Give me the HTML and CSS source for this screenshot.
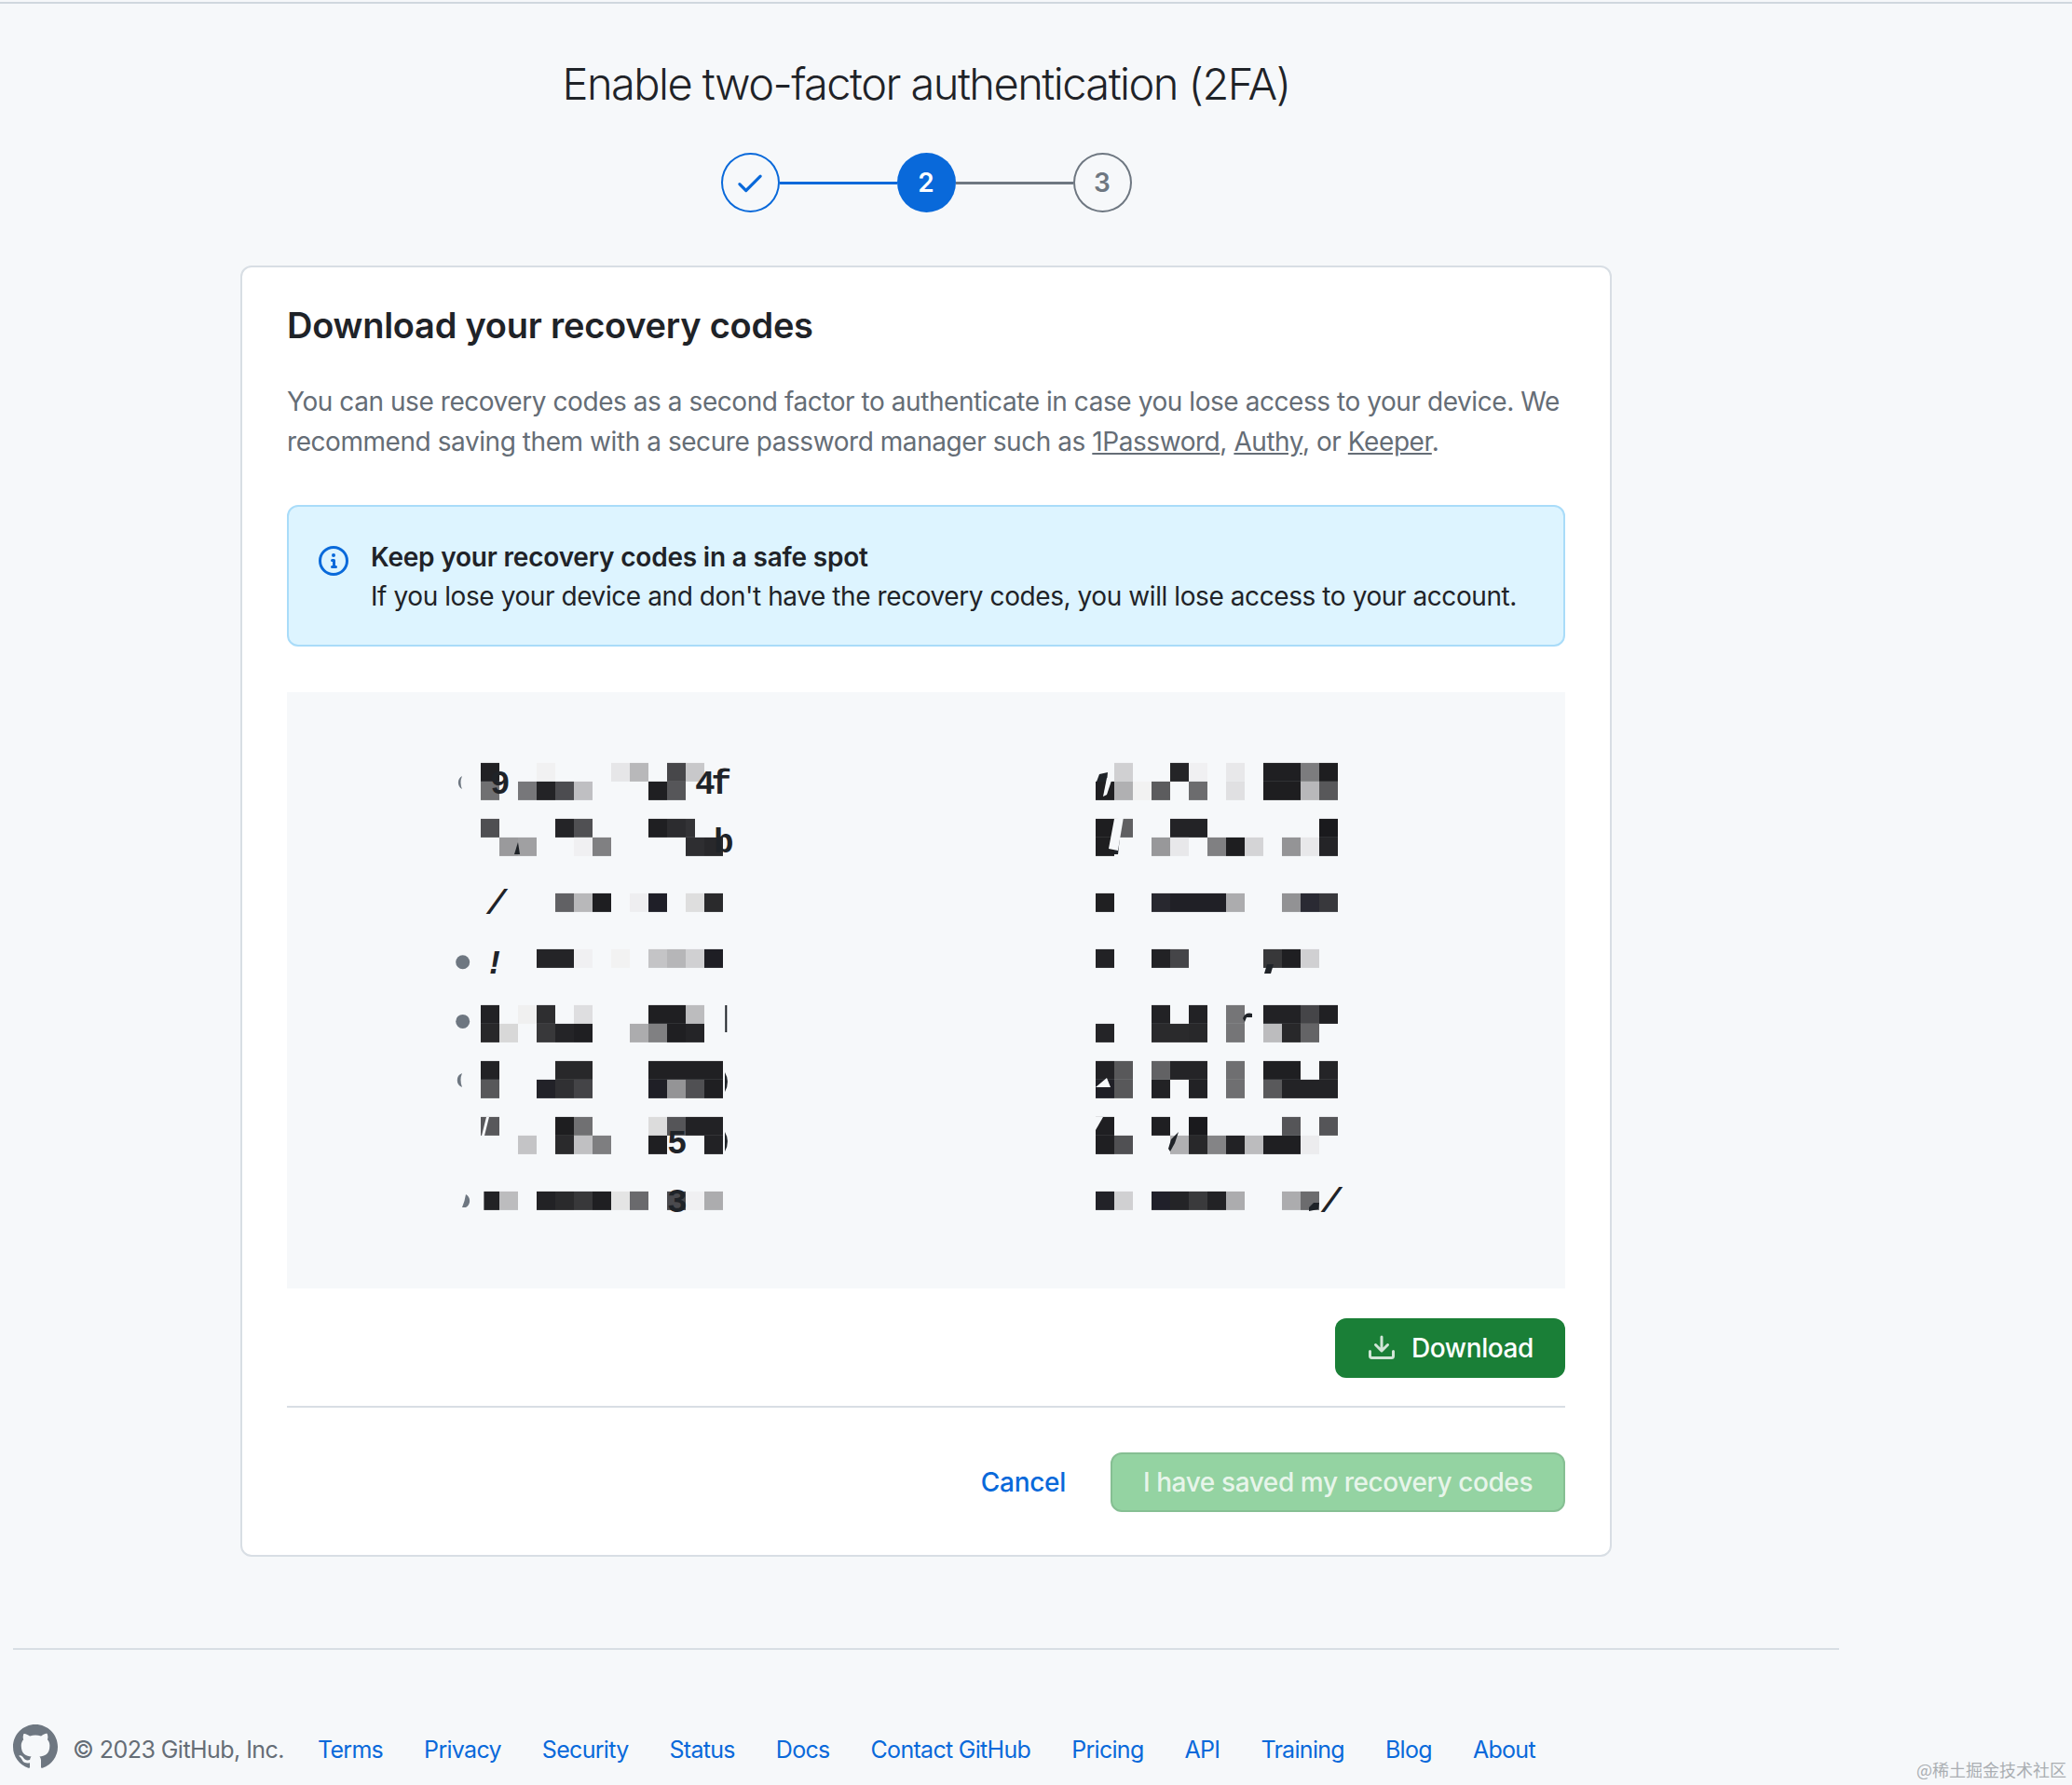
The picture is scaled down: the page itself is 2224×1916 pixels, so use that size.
FILE: index.html
```html
<!DOCTYPE html>
<html lang="en">
<head>
<meta charset="utf-8">
<title>Enable two-factor authentication (2FA)</title>
<link rel="stylesheet" href="styles.css">
</head>
<body>
<div class="page">
  <h1 class="title">Enable two-factor authentication (2FA)</h1>
  <div class="stepper">
    <span class="step step-done"><svg class="check" viewBox="0 0 16 16"><path d="M13.78 4.22a.75.75 0 0 1 0 1.06l-7.25 7.25a.75.75 0 0 1-1.06 0L2.22 9.28a.751.751 0 0 1 .018-1.042.751.751 0 0 1 1.042-.018L6 10.94l6.72-6.72a.75.75 0 0 1 1.06 0Z"/></svg></span>
    <span class="link link-done"></span>
    <span class="step step-current">2</span>
    <span class="link"></span>
    <span class="step step-next">3</span>
  </div>
  <main class="card">
    <h2 class="card-title">Download your recovery codes</h2>
    <p class="lead">You can use recovery codes as a second factor to authenticate in case you lose access to your device. We recommend saving them with a secure password manager such as <a href="#">1Password</a>, <a href="#">Authy</a>, or <a href="#">Keeper</a>.</p>
    <div class="alert">
      <svg class="alert-icon" viewBox="0 0 16 16"><path d="M0 8a8 8 0 1 1 16 0A8 8 0 0 1 0 8Zm8-6.5a6.5 6.5 0 1 0 0 13 6.5 6.5 0 0 0 0-13ZM6.5 7.75A.75.75 0 0 1 7.25 7h1a.75.75 0 0 1 .75.75v2.75h.25a.75.75 0 0 1 0 1.5h-2a.75.75 0 0 1 0-1.5h.25v-2h-.25a.75.75 0 0 1-.75-.75ZM8 6a1 1 0 1 1 0-2 1 1 0 0 1 0 2Z"/></svg>
      <div>
        <div class="alert-title">Keep your recovery codes in a safe spot</div>
        <div class="alert-text">If you lose your device and don't have the recovery codes, you will lose access to your account.</div>
      </div>
    </div>
    <div class="codes">
      <svg class="mosaic" viewBox="0 0 1372 640">
        <g class="bullets">
          <circle cx="188.7" cy="289.8" r="7.5"/><circle cx="188.7" cy="353.4" r="7.5"/>
          <path d="M188 90 A8 8 0 0 0 188 104 Q185 97 188 90Z"/>
          <path d="M188 409 A8 8 0 0 0 188 424 Q185 416 188 409Z"/>
          <path d="M192 539 A8 8 0 0 1 192 553 L188 553 Q191 546 192 539Z"/>
        </g>
        <g transform="translate(208 75.9) scale(20)">
          <rect width="1" height="1" x="0" y="0" fill="#212124"/><rect width="1" height="1" x="3" y="0" fill="#f1f1f2"/><rect width="1" height="1" x="7" y="0" fill="#e6e6e8"/><rect width="1" height="1" x="8" y="0" fill="#b8b8ba"/><rect width="1" height="1" x="10" y="0" fill="#47474a"/><rect width="1" height="1" x="11" y="0" fill="#c8c8ca"/>
          <rect width="1" height="1" x="0" y="1" fill="#707072"/><rect width="1" height="1" x="2" y="1" fill="#77777a"/><rect width="1" height="1" x="3" y="1" fill="#232326"/><rect width="1" height="1" x="4" y="1" fill="#4c4c50"/><rect width="1" height="1" x="5" y="1" fill="#bfbfc2"/><rect width="1" height="1" x="9" y="1" fill="#1f1f22"/><rect width="1" height="1" x="10" y="1" fill="#565659"/>
          <rect width="1" height="1" x="0" y="3" fill="#4f4f52"/><rect width="1" height="1" x="4" y="3" fill="#242427"/><rect width="1" height="1" x="5" y="3" fill="#505053"/><rect width="1" height="1" x="9" y="3" fill="#1f1f22"/><rect width="1" height="1" x="10" y="3" fill="#2c2c2f"/><rect width="0.5" height="1" x="11" y="3" fill="#333336"/>
          <rect width="1" height="1" x="1" y="4" fill="#9a9a9c"/><rect width="1" height="1" x="2" y="4" fill="#a0a0a2"/><rect width="1" height="1" x="5" y="4" fill="#f0f0f2"/><rect width="1" height="1" x="6" y="4" fill="#808082"/><rect width="1" height="1" x="11" y="4" fill="#2e2e31"/><rect width="1" height="1" x="12" y="4" fill="#28282b"/>
          <rect width="1" height="1" x="4" y="7" fill="#616164"/><rect width="1" height="1" x="5" y="7" fill="#b8b8ba"/><rect width="1" height="1" x="6" y="7" fill="#1e1e21"/><rect width="1" height="1" x="8" y="7" fill="#eeeef0"/><rect width="1" height="1" x="9" y="7" fill="#1f1f28"/><rect width="1" height="1" x="11" y="7" fill="#dedede"/><rect width="1" height="1" x="12" y="7" fill="#2a2a2c"/>
          <rect width="2" height="1" x="3" y="10" fill="#242427"/><rect width="1" height="1" x="5" y="10" fill="#f0f0f2"/><rect width="1" height="1" x="7" y="10" fill="#f2f2f2"/><rect width="1" height="1" x="9" y="10" fill="#c4c4c6"/><rect width="1" height="1" x="10" y="10" fill="#b6b6b8"/><rect width="1" height="1" x="11" y="10" fill="#d0d0d2"/><rect width="1" height="1" x="12" y="10" fill="#1e1e24"/>
          <rect width="1" height="1" x="0" y="13" fill="#222225"/><rect width="1" height="1" x="2" y="13" fill="#f0f0f0"/><rect width="1" height="1" x="3" y="13" fill="#2e2e30"/><rect width="1" height="1" x="5" y="13" fill="#dedee0"/><rect width="2" height="1" x="9" y="13" fill="#1f1f22"/><rect width="1" height="1" x="11" y="13" fill="#bcbcbe"/>
          <rect width="1" height="1" x="0" y="14" fill="#28282a"/><rect width="1" height="1" x="1" y="14" fill="#d8d8d8"/><rect width="1" height="1" x="3" y="14" fill="#38383a"/><rect width="1" height="1" x="4" y="14" fill="#242427"/><rect width="1" height="1" x="5" y="14" fill="#1f1f22"/><rect width="1" height="1" x="8" y="14" fill="#acacae"/><rect width="1" height="1" x="9" y="14" fill="#808082"/><rect width="1" height="1" x="10" y="14" fill="#1f1f22"/><rect width="1" height="1" x="11" y="14" fill="#242427"/>
          <rect width="1" height="1" x="0" y="16" fill="#222225"/><rect width="2" height="1" x="4" y="16" fill="#28282a"/><rect width="4" height="1" x="9" y="16" fill="#202023"/>
          <rect width="1" height="1" x="0" y="17" fill="#58585a"/><rect width="1" height="1" x="3" y="17" fill="#222228"/><rect width="1" height="1" x="4" y="17" fill="#303033"/><rect width="1" height="1" x="5" y="17" fill="#444447"/><rect width="1" height="1" x="9" y="17" fill="#1f1f26"/><rect width="1" height="1" x="10" y="17" fill="#949496"/><rect width="1" height="1" x="11" y="17" fill="#505053"/><rect width="1" height="1" x="12" y="17" fill="#1f1f22"/>
          <rect width="1" height="1" x="0" y="19" fill="#58585b"/><rect width="1" height="1" x="4" y="19" fill="#1e1e20"/><rect width="1" height="1" x="5" y="19" fill="#707072"/><rect width="1" height="1" x="9" y="19" fill="#dcdcdc"/><rect width="1" height="1" x="10" y="19" fill="#555558"/><rect width="2" height="1" x="11" y="19" fill="#222225"/>
          <rect width="1" height="1" x="2" y="20" fill="#c4c4c6"/><rect width="1" height="1" x="4" y="20" fill="#2a2a2c"/><rect width="1" height="1" x="5" y="20" fill="#c0c0c2"/><rect width="1" height="1" x="6" y="20" fill="#7e7e80"/><rect width="1" height="1" x="9" y="20" fill="#1f1f22"/><rect width="1" height="1" x="12" y="20" fill="#222225"/>
          <rect width="0.83" height="1" x="0.17" y="23" fill="#222225"/><rect width="1" height="1" x="1" y="23" fill="#bcbcbe"/><rect width="1" height="1" x="3" y="23" fill="#222225"/><rect width="1" height="1" x="4" y="23" fill="#2a2a2c"/><rect width="1" height="1" x="5" y="23" fill="#38383a"/><rect width="1" height="1" x="6" y="23" fill="#1f1f22"/><rect width="1" height="1" x="7" y="23" fill="#e4e4e4"/><rect width="1" height="1" x="8" y="23" fill="#6a6a6d"/><rect width="1" height="1" x="10" y="23" fill="#4a4a4e"/><rect width="1" height="1" x="11" y="23" fill="#f0f0f2"/><rect width="1" height="1" x="12" y="23" fill="#acacae"/>
        </g>
        <g transform="translate(868 75.9) scale(20)">
          <rect width="1" height="1" x="1" y="0" fill="#d0d0d2"/><rect width="1" height="1" x="4" y="0" fill="#242427"/><rect width="1" height="1" x="5" y="0" fill="#f0f0f2"/><rect width="1" height="1" x="7" y="0" fill="#e8e8ea"/><rect width="2" height="1" x="9" y="0" fill="#1f1f22"/><rect width="1" height="1" x="11" y="0" fill="#7c7c7e"/><rect width="1" height="1" x="12" y="0" fill="#1e1e20"/>
          <rect width="1" height="1" x="0" y="1" fill="#1f1f22"/><rect width="1" height="1" x="1" y="1" fill="#b0b0b2"/><rect width="1" height="1" x="2" y="1" fill="#f2f2f2"/><rect width="1" height="1" x="3" y="1" fill="#5c5c5e"/><rect width="1" height="1" x="5" y="1" fill="#6c6c6e"/><rect width="1" height="1" x="7" y="1" fill="#e0e0e2"/><rect width="2" height="1" x="9" y="1" fill="#1e1e20"/><rect width="1" height="1" x="11" y="1" fill="#b8b8ba"/><rect width="1" height="1" x="12" y="1" fill="#58585a"/>
          <rect width="1" height="1" x="0" y="3" fill="#1e1e20"/><rect width="1" height="1" x="1" y="3" fill="#606062"/><rect width="2" height="1" x="4" y="3" fill="#232326"/><rect width="1" height="1" x="12" y="3" fill="#1a1a1d"/>
          <rect width="1" height="1" x="0" y="4" fill="#1e1e20"/><rect width="1" height="1" x="3" y="4" fill="#98989a"/><rect width="1" height="1" x="4" y="4" fill="#e8e8ea"/><rect width="1" height="1" x="6" y="4" fill="#808082"/><rect width="1" height="1" x="7" y="4" fill="#1e1e20"/><rect width="1" height="1" x="8" y="4" fill="#d4d4d6"/><rect width="1" height="1" x="10" y="4" fill="#949496"/><rect width="1" height="1" x="11" y="4" fill="#e8e8ea"/><rect width="1" height="1" x="12" y="4" fill="#242427"/>
          <rect width="1" height="1" x="0" y="7" fill="#202022"/><rect width="1" height="1" x="3" y="7" fill="#28282f"/><rect width="3" height="1" x="4" y="7" fill="#202026"/><rect width="1" height="1" x="7" y="7" fill="#acacae"/><rect width="1" height="1" x="10" y="7" fill="#929294"/><rect width="1" height="1" x="11" y="7" fill="#2a2a33"/><rect width="1" height="1" x="12" y="7" fill="#38383c"/>
          <rect width="1" height="1" x="0" y="10" fill="#222225"/><rect width="1" height="1" x="3" y="10" fill="#222225"/><rect width="1" height="1" x="4" y="10" fill="#454548"/><rect width="1" height="1" x="9" y="10" fill="#38383a"/><rect width="1" height="1" x="10" y="10" fill="#1f1f22"/><rect width="1" height="1" x="11" y="10" fill="#d0d0d2"/>
          <rect width="1" height="1" x="3" y="13" fill="#222225"/><rect width="1" height="1" x="5" y="13" fill="#222225"/><rect width="1" height="1" x="7" y="13" fill="#757577"/><rect width="2" height="1" x="9" y="13" fill="#222225"/><rect width="1" height="1" x="11" y="13" fill="#454548"/><rect width="1" height="1" x="12" y="13" fill="#202023"/>
          <rect width="1" height="1" x="0" y="14" fill="#242427"/><rect width="2" height="1" x="3" y="14" fill="#2a2a2c"/><rect width="1" height="1" x="5" y="14" fill="#28282a"/><rect width="1" height="1" x="7" y="14" fill="#757577"/><rect width="1" height="1" x="9" y="14" fill="#bcbcbe"/><rect width="1" height="1" x="10" y="14" fill="#28282a"/><rect width="1" height="1" x="11" y="14" fill="#646466"/>
          <rect width="1" height="1" x="0" y="16" fill="#222225"/><rect width="1" height="1" x="1" y="16" fill="#58585a"/><rect width="1" height="1" x="3" y="16" fill="#626264"/><rect width="2" height="1" x="4" y="16" fill="#242427"/><rect width="1" height="1" x="7" y="16" fill="#6f6f71"/><rect width="2" height="1" x="9" y="16" fill="#1f1f22"/><rect width="1" height="1" x="12" y="16" fill="#242427"/>
          <rect width="1" height="1" x="0" y="17" fill="#1f1f26"/><rect width="1" height="1" x="1" y="17" fill="#58585a"/><rect width="1" height="1" x="3" y="17" fill="#222225"/><rect width="1" height="1" x="5" y="17" fill="#222225"/><rect width="1" height="1" x="7" y="17" fill="#6f6f71"/><rect width="1" height="1" x="9" y="17" fill="#59595b"/><rect width="3" height="1" x="10" y="17" fill="#232326"/>
          <rect width="1" height="1" x="0" y="19" fill="#1f1f22"/><rect width="1" height="1" x="3" y="19" fill="#1f1f22"/><rect width="1" height="1" x="5" y="19" fill="#1a1a1d"/><rect width="1" height="1" x="10" y="19" fill="#555558"/><rect width="1" height="1" x="12" y="19" fill="#555558"/>
          <rect width="1" height="1" x="0" y="20" fill="#1f1f22"/><rect width="1" height="1" x="1" y="20" fill="#505053"/><rect width="1" height="1" x="4" y="20" fill="#b0b0b2"/><rect width="1" height="1" x="5" y="20" fill="#28282a"/><rect width="1" height="1" x="6" y="20" fill="#848486"/><rect width="1" height="1" x="7" y="20" fill="#222225"/><rect width="1" height="1" x="8" y="20" fill="#bcbcbe"/><rect width="2" height="1" x="9" y="20" fill="#1f1f22"/><rect width="1" height="1" x="11" y="20" fill="#ececee"/>
          <rect width="1" height="1" x="0" y="23" fill="#222228"/><rect width="1" height="1" x="1" y="23" fill="#d0d0d2"/><rect width="1" height="1" x="3" y="23" fill="#20202a"/><rect width="1" height="1" x="4" y="23" fill="#242427"/><rect width="1" height="1" x="5" y="23" fill="#3a3a3c"/><rect width="1" height="1" x="6" y="23" fill="#222225"/><rect width="1" height="1" x="7" y="23" fill="#acacae"/><rect width="1" height="1" x="10" y="23" fill="#acacae"/><rect width="1" height="1" x="11" y="23" fill="#6c6c6e"/>
        </g>
        <g class="artifacts">
          <rect x="470.3" y="336" width="2" height="29"/>
          <path d="M470 408 Q476 418 470 429Z"/>
          <path d="M470 472 Q476 482 470 493Z"/>
          <path d="M869 96 L872 88 L881 86 L880 96Z"/>
          <path d="M888 156 L894 156 L892 174 L888 174Z"/>
          <path d="M1052 292 L1059 292 L1056 302 L1049 302Z"/>
          <path d="M1026 350 Q1029 343 1036 345 L1036 349 L1030 349 L1028 354Z"/>
          <path d="M949 480 L957 472 L953 484 L948 493 L946 490Z"/>
          <path d="M244 174 L248 161 L250 174Z"/>
          <path d="M1102 548 L1108 548 L1107 555 L1097 557 L1097 553Z"/>
        </g>
        <g class="artifacts-light">
          <path d="M209 476 L214 456 L217 456 L212 476Z"/>
          <path d="M868 456 L868 470 L876 456Z"/>
          <path d="M868 424 L880 414 L884 424Z"/>
          <path d="M886 92 L880 110 L876 112 L880 92Z"/>
          <path d="M888 136 L898 134 L892 170 L882 168Z"/>
        </g>
        <g class="code-text">
          <text x="438" y="109.4">4f</text>
          <text x="218" y="109.4">9</text>
          <text x="458" y="172">b</text>
          <text x="214" y="238" class="slanted">/</text>
          <text x="1110" y="557.6" class="slanted">/</text>
          <text x="408" y="557.6">3</text>
          <text x="408" y="495">5</text>
          <text x="212" y="301.6" class="slanted">!</text>
        </g>
      </svg>
    </div>
    <div class="download-row">
      <button class="btn btn-primary" type="button"><svg class="btn-icon" viewBox="0 0 16 16"><path d="M2.75 14A1.75 1.75 0 0 1 1 12.25v-2.5a.75.75 0 0 1 1.5 0v2.5c0 .138.112.25.25.25h10.5a.25.25 0 0 0 .25-.25v-2.5a.75.75 0 0 1 1.5 0v2.5A1.75 1.75 0 0 1 13.25 14Z"/><path d="M7.25 7.689V2a.75.75 0 0 1 1.5 0v5.689l1.97-1.969a.749.749 0 1 1 1.06 1.06l-3.25 3.25a.749.749 0 0 1-1.06 0L4.22 6.78a.749.749 0 1 1 1.06-1.06l1.97 1.969Z"/></svg>Download</button>
    </div>
    <div class="actions">
      <a class="cancel" href="#">Cancel</a>
      <button class="btn btn-disabled" type="button">I have saved my recovery codes</button>
    </div>
  </main>
  <footer class="footer">
    <svg class="mark" viewBox="0 0 16 16"><path d="M8 0c4.42 0 8 3.58 8 8a8.013 8.013 0 0 1-5.45 7.59c-.4.08-.55-.17-.55-.38 0-.27.01-1.13.01-2.2 0-.75-.25-1.23-.54-1.48 1.78-.2 3.65-.88 3.65-3.95 0-.88-.31-1.59-.82-2.15.08-.2.36-1.02-.08-2.12 0 0-.67-.22-2.2.82-.64-.18-1.32-.27-2-.27-.68 0-1.36.09-2 .27-1.53-1.03-2.2-.82-2.2-.82-.44 1.1-.16 1.92-.08 2.12-.51.56-.82 1.28-.82 2.15 0 3.06 1.86 3.75 3.64 3.95-.23.2-.44.55-.51 1.07-.46.21-1.61.55-2.33-.66-.15-.24-.6-.83-1.23-.82-.67.01-.27.38.01.53.34.19.73.9.82 1.13.16.45.68 1.31 2.69.94 0 .67.01 1.3.01 1.49 0 .21-.15.45-.55.38A7.995 7.995 0 0 1 0 8c0-4.42 3.58-8 8-8Z"/></svg>
    <span class="copyright">© 2023 GitHub, Inc.</span>
    <nav class="footer-links">
      <a href="#">Terms</a><a href="#">Privacy</a><a href="#">Security</a><a href="#">Status</a><a href="#">Docs</a><a href="#">Contact GitHub</a><a href="#">Pricing</a><a href="#">API</a><a href="#">Training</a><a href="#">Blog</a><a href="#">About</a>
    </nav>
  </footer>
</div>
<div class="watermark">@稀土掘金技术社区</div>
</body>
</html>
```

FILE: styles.css
```css
* { box-sizing: border-box; }
html, body { margin: 0; padding: 0; }
body {
  position: relative;
  width: 2224px;
  height: 1916px;
  overflow: hidden;
  margin-top: 0;
  padding-top: 2px;
  background: #f6f8fa;
  font-family: Inter, "Noto Sans CJK SC", sans-serif;
  font-size: 28px;
  color: #1f2328;
}
.page {
  padding: 0 250px 0 14px;
  border-top: 2px solid #d0d7de;
  display: flex;
  flex-direction: column;
  align-items: center;
}
.title {
  margin: 56px 0 0;
  font-size: 47px;
  line-height: 60px;
  font-weight: 300;
  letter-spacing: -1.55px;
  color: #1f2328;
}
.stepper {
  display: flex;
  align-items: center;
  margin-top: 44px;
}
.step {
  width: 63px;
  height: 64px;
  border-radius: 50%;
  display: flex;
  align-items: center;
  justify-content: center;
  font-size: 28px;
  font-weight: 600;
}
.step-done { border: 2px solid #0969da; }
.check { width: 34px; height: 34px; fill: #0969da; }
.step-current { background: #0969da; color: #fff; }
.step-next { border: 2px solid #6e7781; color: #6e7781; }
.link { width: 126px; height: 3px; background: #6e7781; }
.link-done { background: #0969da; }
.card {
  width: 1472px;
  height: 1386px;
  margin-top: 57px;
  padding: 38px 48px 0;
  background: #fff;
  border: 2px solid #d8dee4;
  border-radius: 12px;
}
.card-title {
  margin: 0;
  font-size: 38px;
  line-height: 48px;
  font-weight: 600;
  letter-spacing: -0.25px;
}
.lead {
  margin: 37px 0 0;
  line-height: 42.5px;
  font-size: 28px;
  letter-spacing: -0.44px;
  color: #656d76;
}
.lead a { color: #656d76; text-decoration: underline; }
.alert {
  display: flex;
  gap: 24px;
  height: 152px;
  margin-top: 47px;
  padding: 33px 32px;
  background: #ddf4ff;
  border: 2px solid #a9dcf9;
  border-radius: 12px;
  line-height: 42px;
  font-size: 28px;
}
.alert-icon { width: 32px; height: 32px; margin-top: 9px; fill: #0969da; flex: none; }
.alert-title { font-weight: 600; letter-spacing: -0.2px; white-space: nowrap; }
.alert-text { letter-spacing: -0.42px; white-space: nowrap; }
.codes {
  height: 640px;
  margin-top: 49px;
  background: #f6f8fa;
}
.mosaic { display: block; width: 100%; height: 100%; }
.bullets { fill: #6e7781; }
.artifacts { fill: #1f2328; }
.artifacts-light { fill: #f6f8fa; }
.code-text {
  font-family: "Liberation Mono", monospace;
  font-weight: 700;
  font-size: 36px;
  letter-spacing: -4px;
  fill: #1f2328;
}
.slanted { font-style: italic; }
.download-row {
  display: flex;
  justify-content: flex-end;
  margin-top: 32px;
  padding-bottom: 30px;
  border-bottom: 2px solid #d8dee4;
}
.btn {
  height: 64px;
  display: inline-flex;
  align-items: center;
  justify-content: center;
  padding: 0;
  border-radius: 12px;
  border: 2px solid transparent;
  white-space: nowrap;
  font: 500 28px Inter, sans-serif;
  letter-spacing: -0.4px;
}
.btn-primary { width: 247px; background: #1a7f37; color: #fff; gap: 16px; }
.btn-icon { width: 32px; height: 32px; fill: #fff; opacity: .8; flex: none; }
.btn-disabled {
  width: 488px;
  background: #94d3a2;
  border-color: #86bf93;
  color: rgba(255, 255, 255, .8);
}
.actions {
  display: flex;
  align-items: center;
  justify-content: flex-end;
  gap: 48px;
  margin-top: 48px;
}
.cancel { color: #0969da; font-weight: 500; letter-spacing: -0.3px; text-decoration: none; }
.footer {
  align-self: stretch;
  display: flex;
  align-items: center;
  margin-top: 98px;
  padding-top: 80px;
  border-top: 2px solid #d8dee4;
  font-size: 25px;
  letter-spacing: -0.7px;
}
.mark { width: 48px; height: 48px; fill: #6e7781; flex: none; }
.copyright { margin: 6px 0 0 16px; letter-spacing: -0.55px; color: #656d76; }
.footer-links { display: flex; gap: 44px; margin: 6px 0 0 36px; }
.footer-links a { color: #0969da; text-decoration: none; }
.watermark {
  position: absolute;
  right: 6px;
  bottom: 8px;
  font-size: 18px;
  line-height: 18px;
  color: #aaaeb2;
  font-family: "Noto Sans CJK SC", sans-serif;
}
```
